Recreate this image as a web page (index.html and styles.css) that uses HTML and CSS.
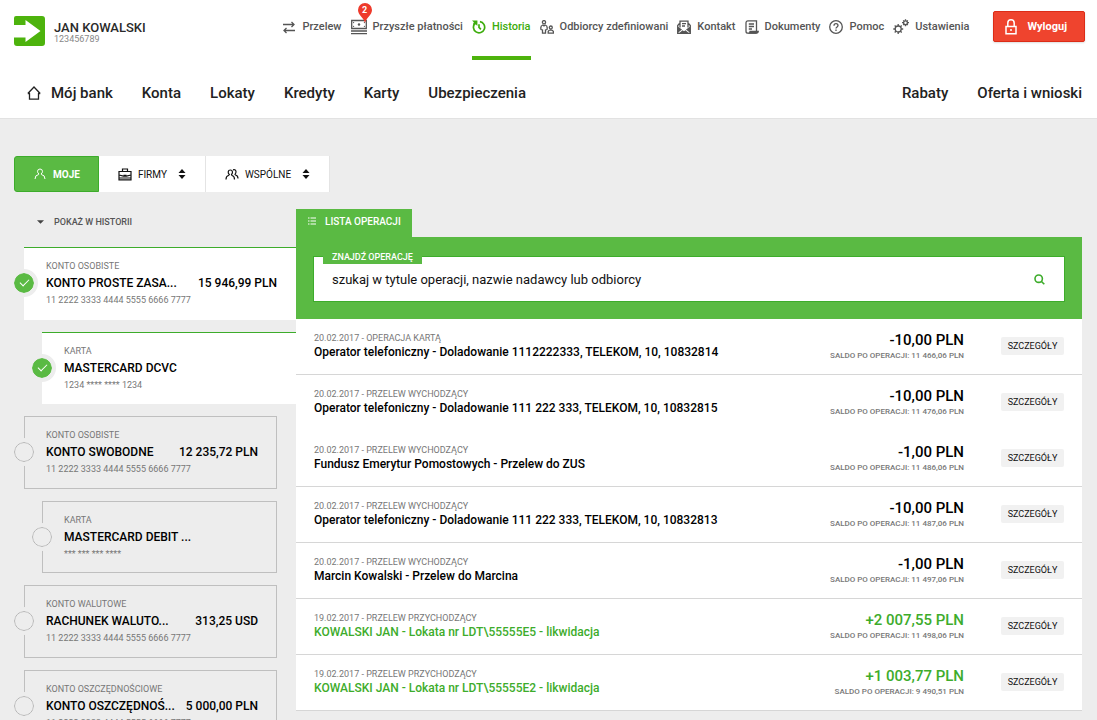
FILE: index.html
```html
<!DOCTYPE html>
<html lang="pl">
<head>
<meta charset="utf-8">
<meta name="viewport" content="width=device-width, initial-scale=1">
<title>Historia operacji</title>
<link rel="stylesheet" href="styles.css">
</head>
<body>
<header class="header">
  <div class="topbar">
    <svg class="logo" viewBox="0 0 31 30" aria-hidden="true"><path d="M2 0H28A3 3 0 0 1 31 3V27A3 3 0 0 1 28 30H3A3 3 0 0 1 0 27V21.500H11.500V26L26.500 15 11.500 4V9H0V2A2 2 0 0 1 2 0Z" fill="#4db30d"/></svg>
    <div class="user">
      <div class="user-name">JAN KOWALSKI</div>
      <div class="user-id">123456789</div>
    </div>
    <nav class="tools">
      <a class="tool" href="#"><svg viewBox="0 0 14 14" class="icon"><path d="M1 4.500H12M9.500 2 12 4.500 9.500 7M13 10.500H2M4.500 8 2 10.500 4.500 13" /></svg>Przelew</a>
      <a class="tool" href="#"><svg viewBox="0 0 16 16" class="icon icon-wide"><path d="M.7 1.500H15.300V9.500H.7ZM0 12H16M0 14.700H16"/><path class="fill" d="M2 3H3.500L2 4.500ZM14 3H12.500L14 4.500ZM2 8H3.500L2 6.500ZM14 8H12.500L14 6.500Z"/><circle cx="8" cy="5.500" r="1.200" class="fill"/></svg>Przyszłe płatności
        <span class="badge"><svg viewBox="0 0 14 20" aria-hidden="true"><path d="M7 20C6 15 0 12 0 7A7 7 0 0 1 14 7C14 12 8 15 7 20Z" fill="#ee3a2b"/></svg><b>2</b></span></a>
      <a class="tool active" href="#"><svg viewBox="0 0 15 15" class="icon"><path class="heavy" d="M3.300 3.500A6 6 0 1 0 8.500 1.800M7.500 4.500V8L9.500 10"/><path d="M0 .5H5.800V6.300L4 4.500 2.500 6 1 4.500 2 2.500Z" class="fill"/></svg>Historia</a>
      <a class="tool" href="#"><svg viewBox="0 0 14 14" class="icon"><circle cx="4" cy="2.200" r="1.600"/><path d="M2.800 5C.5 5.800.5 7.500 1 9.500L2.500 10V13.200H5.500V10L7 9.500C7.500 7.500 7.500 5.800 5.200 5L4 6Z"/><circle cx="10.800" cy="7.500" r="1.500"/><path d="M8.200 13.200V11.500Q8.500 10 10.800 9.800 13 10 13.400 11.500V13.200Z"/></svg>Odbiorcy zdefiniowani</a>
      <a class="tool" href="#"><svg viewBox="0 0 14 14" class="icon"><path d="M3 7.500V1.200H11V7.500M5 3.700H9M5 6H8M2.500 3.500 .7 5.500V13.300H13.300V5.500L11.500 3.500"/><path class="fill" d="M.7 6.500 5 9.500 .7 13ZM13.300 6.500 9 9.500 13.300 13ZM1.500 13.700 5.500 10.300 7 11.300 8.500 10.300 12.500 13.700Z"/></svg>Kontakt</a>
      <a class="tool" href="#"><svg viewBox="0 0 14 14" class="icon"><path d="M11.500 11V.8H3Q1 .8 1 3V11.200Q1 13.200 3 13.200H11.500M3.800 4H9M3.800 6.500H9M3.800 9H7"/><path class="fill" d="M4.500 10.800H14Q13.800 13.800 11.500 13.800H3Q4.500 13 4.500 10.800Z"/></svg>Dokumenty</a>
      <a class="tool" href="#"><svg viewBox="0 0 14 14" class="icon"><circle cx="7" cy="7" r="6.300"/><path d="M5 5.700Q5 3.700 7 3.700T9 5.600C9 7 7 6.900 7 8.600M7 9.600V11"/></svg>Pomoc</a>
      <a class="tool" href="#"><svg viewBox="0 0 16 16" class="icon icon-wide"><circle cx="5.200" cy="10" r="3"/><path d="M5.200 5V7M5.200 13V15M.3 10H2.200M8.200 10H10.200M1.700 6.500 3 7.900M7.400 12.100 8.700 13.500M1.700 13.500 3 12.100M7.400 7.900 8.700 6.500"/><circle cx="12.500" cy="3.700" r="1.900"/><path d="M12.500.3V1.800M12.500 5.600V7.200M9 3.700H10.600M14.400 3.700H16M10.200 1.400 11.200 2.400M13.800 5 14.800 6M10.200 6 11.200 5M13.800 2.400 14.800 1.400"/></svg>Ustawienia</a>
    </nav>
    <button class="logout" type="button"><svg viewBox="0 0 12 16" class="icon-lock"><path d="M1 7.500H11V14.800H1ZM2.800 7V4A3.200 3.200 0 0 1 9.200 4V7M5 11H7"/></svg>Wyloguj</button>
  </div>
  <nav class="mainnav">
    <a href="#"><svg viewBox="0 0 14 14" class="icon"><path d="M2.500 7.200V13.200H11.500V7.200M.8 7.500 7 1 13.200 7.500M.8 7.500H3M11 7.500H13.200"/></svg>Mój bank</a>
    <a href="#">Konta</a>
    <a href="#">Lokaty</a>
    <a href="#">Kredyty</a>
    <a href="#">Karty</a>
    <a href="#">Ubezpieczenia</a>
    <a class="push" href="#">Rabaty</a>
    <a href="#">Oferta i wnioski</a>
  </nav>
</header>

<main class="page">
  <div class="scopes">
    <button class="scope selected" type="button"><svg viewBox="0 0 12 12" class="icon-s"><path d="M1 11Q1 7 4.500 6.600L5 6Q3.500 5 3.500 3.300 3.700 1 6 1T8.500 3.300Q8.500 5 7 6L7.500 6.600Q11 7 11 11"/></svg>MOJE</button>
    <button class="scope" type="button"><svg viewBox="0 0 14 13" class="icon-m"><path d="M1 3.500H13V11.800H1ZM4.500 3.500V1H9.500V3.500M1 7 5.500 8.200H8.500L13 7M5.500 7.300H8.500M1 10H13"/></svg>FIRMY<svg viewBox="0 0 8 12" class="sort"><path d="M4 1 7.500 5H.5ZM4 11 7.500 7H.5Z"/></svg></button>
    <button class="scope" type="button"><svg viewBox="0 0 14 12" class="icon-m"><path d="M1 11Q1 7.500 3.500 7L4.300 6Q3 5 3.200 3.300 3.500 1.500 5.300 1.500T7.500 3.300Q7.600 5 6.500 6L7 7Q9.500 7.500 9.500 11M8 1.300Q11 .5 11 3.300 11 4.800 10 5.800L10.500 6.500Q13 7 13 10"/></svg>WSPÓLNE<svg viewBox="0 0 8 12" class="sort"><path d="M4 1 7.500 5H.5ZM4 11 7.500 7H.5Z"/></svg></button>
  </div>

  <div class="columns">
    <aside class="sidebar">
      <button class="show-toggle" type="button"><svg viewBox="0 0 8 4" class="caret"><path d="M0 0H8L4 4Z"/></svg>POKAŻ W HISTORII</button>
      <label class="account checked">
        <input type="checkbox" checked>
        <span class="kind">KONTO OSOBISTE</span>
        <span class="line"><span>KONTO PROSTE ZASA...</span><span>15 946,99 PLN</span></span>
        <span class="number">11 2222 3333 4444 5555 6666 7777</span>
      </label>
      <label class="account card checked">
        <input type="checkbox" checked>
        <span class="kind">KARTA</span>
        <span class="line"><span>MASTERCARD DCVC</span></span>
        <span class="number">1234 **** **** 1234</span>
      </label>
      <label class="account">
        <input type="checkbox">
        <span class="kind">KONTO OSOBISTE</span>
        <span class="line"><span>KONTO SWOBODNE</span><span>12 235,72 PLN</span></span>
        <span class="number">11 2222 3333 4444 5555 6666 7777</span>
      </label>
      <label class="account card">
        <input type="checkbox">
        <span class="kind">KARTA</span>
        <span class="line"><span>MASTERCARD DEBIT ...</span></span>
        <span class="number">*** *** *** ****</span>
      </label>
      <label class="account">
        <input type="checkbox">
        <span class="kind">KONTO WALUTOWE</span>
        <span class="line"><span>RACHUNEK WALUTO...</span><span>313,25 USD</span></span>
        <span class="number">11 2222 3333 4444 5555 6666 7777</span>
      </label>
      <label class="account">
        <input type="checkbox">
        <span class="kind">KONTO OSZCZĘDNOŚCIOWE</span>
        <span class="line"><span>KONTO OSZCZĘDNOŚ...</span><span>5 000,00 PLN</span></span>
        <span class="number">11 2222 3333 4444 5555 6666 7777</span>
      </label>
    </aside>

    <section class="history">
      <h2 class="tab"><svg viewBox="0 0 8 8" class="list-icon"><path d="M0 1H1.500M2.500 1H8M0 4H1.500M2.500 4H8M0 7H1.500M2.500 7H8"/></svg>LISTA OPERACJI</h2>
      <form class="search">
        <div class="search-box">
          <label for="query">ZNAJDŹ OPERACJĘ</label>
          <input id="query" type="text" placeholder="szukaj w tytule operacji, nazwie nadawcy lub odbiorcy">
          <button type="button" aria-label="Szukaj"><svg viewBox="0 0 11 11"><circle cx="4.700" cy="4.700" r="3.700"/><path d="M7.500 7.500 10.300 10.300"/></svg></button>
        </div>
      </form>
      <ul class="operations">
        <li class="operation">
          <div class="what"><div class="kind">20.02.2017 - OPERACJA KARTĄ</div><div class="title">Operator telefoniczny - Doladowanie 1112222333, TELEKOM, 10, 10832814</div></div>
          <div class="value"><div class="amount">-10,00 PLN</div><div class="balance">SALDO PO OPERACJI: 11 466,06 PLN</div></div>
          <button class="details" type="button">SZCZEGÓŁY</button>
        </li>
        <li class="operation joined">
          <div class="what"><div class="kind">20.02.2017 - PRZELEW WYCHODZĄCY</div><div class="title">Operator telefoniczny - Doladowanie 111 222 333, TELEKOM, 10, 10832815</div></div>
          <div class="value"><div class="amount">-10,00 PLN</div><div class="balance">SALDO PO OPERACJI: 11 476,06 PLN</div></div>
          <button class="details" type="button">SZCZEGÓŁY</button>
        </li>
        <li class="operation">
          <div class="what"><div class="kind">20.02.2017 - PRZELEW WYCHODZĄCY</div><div class="title">Fundusz Emerytur Pomostowych - Przelew do ZUS</div></div>
          <div class="value"><div class="amount">-1,00 PLN</div><div class="balance">SALDO PO OPERACJI: 11 486,06 PLN</div></div>
          <button class="details" type="button">SZCZEGÓŁY</button>
        </li>
        <li class="operation">
          <div class="what"><div class="kind">20.02.2017 - PRZELEW WYCHODZĄCY</div><div class="title">Operator telefoniczny - Doladowanie 111 222 333, TELEKOM, 10, 10832813</div></div>
          <div class="value"><div class="amount">-10,00 PLN</div><div class="balance">SALDO PO OPERACJI: 11 487,06 PLN</div></div>
          <button class="details" type="button">SZCZEGÓŁY</button>
        </li>
        <li class="operation">
          <div class="what"><div class="kind">20.02.2017 - PRZELEW WYCHODZĄCY</div><div class="title">Marcin Kowalski - Przelew do Marcina</div></div>
          <div class="value"><div class="amount">-1,00 PLN</div><div class="balance">SALDO PO OPERACJI: 11 497,06 PLN</div></div>
          <button class="details" type="button">SZCZEGÓŁY</button>
        </li>
        <li class="operation income">
          <div class="what"><div class="kind">19.02.2017 - PRZELEW PRZYCHODZĄCY</div><div class="title">KOWALSKI JAN - Lokata nr LDT\55555E5 - likwidacja</div></div>
          <div class="value"><div class="amount">+2 007,55 PLN</div><div class="balance">SALDO PO OPERACJI: 11 498,06 PLN</div></div>
          <button class="details" type="button">SZCZEGÓŁY</button>
        </li>
        <li class="operation income">
          <div class="what"><div class="kind">19.02.2017 - PRZELEW PRZYCHODZĄCY</div><div class="title">KOWALSKI JAN - Lokata nr LDT\55555E2 - likwidacja</div></div>
          <div class="value"><div class="amount">+1 003,77 PLN</div><div class="balance">SALDO PO OPERACJI: 9 490,51 PLN</div></div>
          <button class="details" type="button">SZCZEGÓŁY</button>
        </li>
      </ul>
    </section>
  </div>
</main>
</body>
</html>
```
FILE: styles.css
```css
* { box-sizing: border-box; }

body {
  margin: 0;
  background: #ededed;
  color: #111;
  font-family: Roboto, "Liberation Sans", sans-serif;
  font-size: 12px;
}

a { color: inherit; text-decoration: none; }
button { font: inherit; color: inherit; border: 0; margin: 0; cursor: pointer; }
svg { display: block; flex: none; fill: none; stroke: currentColor; }

/* Header */
.header {
  background: #fff;
  border-bottom: 1px solid #e2e2e2;
}
.topbar {
  display: flex;
  align-items: flex-start;
  height: 68px;
  padding: 0 12px 0 14px;
}
.logo { width: 31px; height: 30px; margin-top: 16px; stroke: none; }
.user { margin: 20px 0 0 9px; }
.user-name { font-size: 13px; font-weight: 500; line-height: 15px; color: #2a2a2a; }
.user-id { font-size: 9px; line-height: 9px; color: #888; }

.tools {
  display: flex;
  gap: 9px;
  margin-left: auto;
  margin-right: 24px;
}
.tool {
  position: relative;
  display: flex;
  align-items: center;
  gap: 6px;
  height: 60px;
  padding-bottom: 7px;
  font-size: 11px;
  font-weight: 500;
  color: #555;
  white-space: nowrap;
}
.icon { width: 14px; height: 14px; stroke-width: 1.3; }
.icon-wide { width: 16px; height: 16px; }
.icon .heavy { stroke-width: 1.8; }
.icon .fill { fill: currentColor; stroke: none; }
.active { color: #3dac0c; border-bottom: 4px solid #4db30d; padding-bottom: 3px; }
.badge {
  position: absolute;
  left: 7px;
  top: 3px;
  width: 14px;
  color: #fff;
}
.badge b {
  position: absolute;
  inset: 0;
  font-size: 9px;
  line-height: 15px;
  text-align: center;
}
.badge svg { width: 14px; height: 20px; stroke: none; }
.logout {
  display: flex;
  align-items: center;
  gap: 10px;
  height: 31px;
  margin-top: 11px;
  padding: 0 17px 0 11px;
  border: 1px solid #dc2c17;
  border-radius: 2px;
  background: #ef442e;
  color: #fff;
  font-size: 11px;
  font-weight: 700;
  box-shadow: 0 1px 2px #ddd;
}
.icon-lock { width: 12px; height: 16px; stroke-width: 1.5; }

.mainnav {
  display: flex;
  align-items: center;
  gap: 29px;
  height: 50px;
  padding: 0 15px 0 27px;
  font-size: 15px;
  font-weight: 500;
  color: #222;
}
.mainnav a { display: flex; align-items: center; gap: 10px; white-space: nowrap; }
.mainnav .push { margin-left: auto; }

/* Page */
.page { padding: 37px 15px 0 14px; }
.scopes { display: flex; height: 36px; }
.scope {
  display: flex;
  align-items: center;
  padding: 0 19px;
  background: #fff;
  border-right: 1px solid #e4e4e4;
  font-size: 10px;
}
.selected {
  padding: 0 18px 0 19px;
  border: 1px solid #3dac2b;
  border-radius: 3px 0 0 3px;
  background: #5aba43;
  color: #fff;
  font-weight: 700;
}
.icon-s { width: 12px; height: 12px; margin-right: 7px; }
.icon-m { width: 14px; height: 13px; margin-right: 6px; stroke-width: 1.2; }
.sort { width: 8px; height: 12px; margin-left: 11px; fill: #111; stroke: none; }

.columns { display: flex; align-items: flex-start; margin-top: 17px; }

/* Accounts */
.sidebar { flex: 0 0 282px; }
.show-toggle {
  display: flex;
  align-items: center;
  gap: 10px;
  height: 26px;
  margin-bottom: 12px;
  padding: 0 0 0 23px;
  background: none;
  font-size: 9px;
  font-weight: 500;
  color: #555;
}
.caret { width: 7px; height: 4px; fill: #444; stroke: none; }
.account {
  position: relative;
  display: block;
  margin: 0 19px 12px 10px;
  padding: 11px 18px 12px 21px;
  border: 1px solid #bfbfbf;
}
.account.card { margin-left: 28px; padding-bottom: 11px; }
.account.checked {
  margin-right: 0;
  background: #fff;
  border-width: 1px 0 0;
  border-color: #3dac2b;
  padding: 11px 19px 13px 22px;
}
.account.card.checked { padding-bottom: 12px; }
.account input {
  appearance: none;
  position: absolute;
  left: -11px;
  top: 25px;
  width: 20px;
  height: 20px;
  margin: 0;
  border: 1px solid #b5b5b5;
  border-radius: 50%;
  background: #ededed;
  outline: 4px solid #ededed;
}
.account input:checked { left: -10px; border-color: #5aba43; background: #5aba43; }
.account input:checked::after {
  content: "";
  position: absolute;
  left: 5px;
  top: 5px;
  width: 8px;
  height: 4px;
  border: solid #fff;
  border-width: 0 0 1px 1px;
  transform: rotate(-45deg);
}
.kind, .number { display: block; font-size: 9px; line-height: 14px; color: #777; }
.line {
  display: flex;
  justify-content: space-between;
  font-weight: 500;
  line-height: 20px;
  color: #000;
  white-space: nowrap;
}

/* Operations */
.history { flex: 1; min-width: 0; }
.tab {
  display: flex;
  align-items: center;
  gap: 9px;
  width: max-content;
  height: 28px;
  margin: 0;
  padding: 0 11px 4px 12px;
  background: #5aba43;
  color: #fff;
  font-size: 10px;
  font-weight: 500;
}
.list-icon { width: 8px; height: 8px; }
.search {
  padding: 20px 18px 18px;
  background: #5aba43;
}
.search-box {
  position: relative;
  display: flex;
  align-items: center;
  height: 44px;
  padding: 0 19px 0 18px;
  background: #fff;
  outline: 1px solid #3dac2b;
}
.search-box label {
  position: absolute;
  left: 9px;
  top: -7px;
  padding: 0 9px;
  background: #5aba43;
  color: #fff;
  font-size: 9px;
  font-weight: 500;
  line-height: 14px;
}
.search-box input {
  flex: 1;
  min-width: 0;
  padding: 0;
  border: 0;
  font: inherit;
  font-size: 13px;
}
.search-box input::placeholder { color: #111; }
.search-box button { padding: 0; background: none; color: #3dac2b; }
.search-box svg { width: 11px; height: 11px; stroke-width: 1.6; }

.operations { margin: 0; padding: 0; list-style: none; background: #fff; }
.operation {
  display: flex;
  align-items: flex-start;
  height: 56px;
  padding: 12px 18px 0;
  border-bottom: 1px solid #d6d6d6;
}
.joined { border-bottom-color: #fff; }
.what { flex: 1; min-width: 0; }
.title { font-weight: 500; line-height: 15px; color: #000; }
.value { text-align: right; margin-right: 37px; }
.amount { font-size: 15px; font-weight: 500; line-height: 18px; color: #000; }
.balance { font-size: 8px; font-weight: 500; line-height: 14px; color: #777; }
.income .title, .income .amount { color: #3dac2b; }
.details {
  width: 63px;
  height: 18px;
  margin-top: 6px;
  padding: 0;
  border-radius: 2px;
  background: #f1f1f1;
  color: #111;
  font-size: 9px;
}
```
